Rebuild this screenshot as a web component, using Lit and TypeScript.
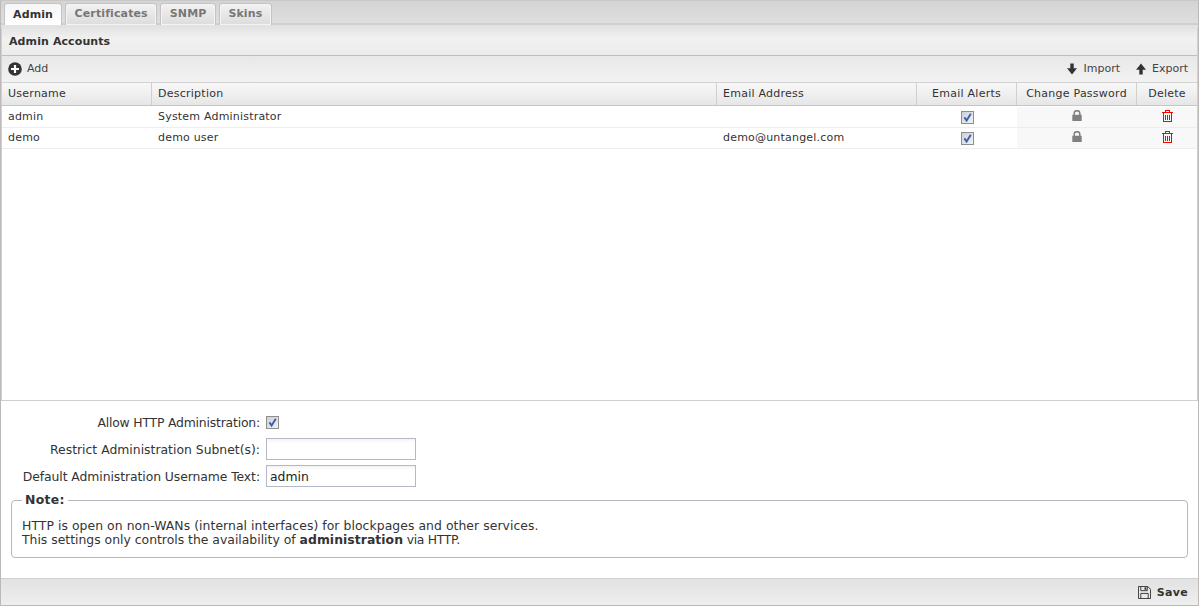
import { LitElement, html, css } from "lit";
import { customElement } from "lit/decorators.js";

const tick = html`<svg viewBox="0 0 13 13" width="13" height="13"><path d="M3.4 6.4 5.6 9.6 9.8 2.8" fill="none" stroke="#3f5fa8" stroke-width="1.9"/></svg>`;
const lock = html`<svg class="ic" viewBox="0 0 10 11" width="10" height="11"><path d="M0.3 4.8h9.4v5.6a.6.6 0 0 1-.6.6H.9a.6.6 0 0 1-.6-.6z" fill="#808080"/><path d="M2.2 5.2V3.2a2.8 2.5 0 0 1 5.6 0v2" fill="none" stroke="#808080" stroke-width="1.5"/></svg>`;
const trash = html`<svg class="ic" viewBox="0 0 11 12" width="11" height="12" shape-rendering="crispEdges"><g fill="none" stroke="#f00" stroke-width="1"><path d="M0 2.5h11M3.5 2.5V.5h4v2M1.5 2.5v9h8v-9M3.5 4.5v5M5.5 4.5v5M7.5 4.5v5"/></g></svg>`;

@customElement("app-root")
export class AppRoot extends LitElement {
  static styles = css`
    :host { display: block; width: 1199px; height: 606px; font-family: "DejaVu Sans", sans-serif; font-size: 11px; color: #333; overflow: hidden; }
    * { box-sizing: border-box; }
    .app { height: 606px; display: flex; flex-direction: column; border: 1px solid #bfb8b8; border-top-color: #c8c8c8; background: #fff; }
    .tabs { height: 24px; flex: none; display: flex; gap: 3px; padding: 2px 0 0 3px; background: linear-gradient(#d4d4d4, #dedede); border-bottom: 2px solid #d0d0d0; }
    .tab { height: 22px; padding: 0 8.5px 2px; border: 1px solid #c4c4c4; border-bottom: none; border-radius: 3px 3px 0 0; display: flex; align-items: center; font-weight: bold; color: #777; background: linear-gradient(#f2f2f2, #dcdcdc); box-shadow: inset 0 0 0 1px #f4f4f4; letter-spacing: .12px; }
    .tab.on { color: #333; background: linear-gradient(#f6f6f6, #fff); height: 23px; padding: 0 8px 2px 8px; box-shadow: none; }
    .strip { height: 3px; flex: none; background: #e2e2e2; }
    .body { flex: 1; display: flex; flex-direction: column; min-height: 0; }
    .panel { height: 373px; flex: none; display: flex; flex-direction: column; border-left: 1px solid #d0d0d0; border-right: 1px solid #d0d0d0; border-bottom: 1px solid #d0d0d0; }
    .phead { height: 28px; flex: none; display: flex; align-items: center; padding-left: 7px; font-weight: bold; background: linear-gradient(#e4e4e4, #f1f1f1 40%, #ececec); border-bottom: 1px solid #c4bcbc; letter-spacing: .1px; }
    .tbar { height: 27px; flex: none; display: flex; align-items: center; padding: 0 9px 1px 6px; background: linear-gradient(#e8e8e8, #f2f2f2); border-bottom: 1px solid #d2d2d2; color: #444; }
    .tbtn { display: flex; align-items: center; gap: 5px; }
    .tbtn + .tbtn { margin-left: 15px; }
    .sp { flex: 1; }
    .row { display: grid; grid-template-columns: 150px 565px 200px 100px 120px 60px; }
    .hrow { height: 23px; background: linear-gradient(#f8f8f8, #e6e6e6); border-bottom: 1px solid #c6c6c6; }
    .hrow > div { display: flex; align-items: center; padding: 0 0 1px 6px; border-right: 1px solid #d0d0d0; letter-spacing: .25px; }
    .hrow > .c { justify-content: center; padding: 0 0 1px; }
    .hrow > div:last-child { border-right: none; }
    .rows { padding-top: 1px; }
    .drow { height: 21px; border-bottom: 1px solid #ededed; }
    .drow > div { display: flex; align-items: center; padding-left: 6px; letter-spacing: .2px; padding-bottom: 2px; }
    .drow > .c { justify-content: center; padding: 0; }
    .drow > .act { background: #f8f8f8; align-items: flex-start; padding-top: 3px; }
    .ic { display: block; }
    .cb { display: inline-block; width: 13px; height: 13px; border: 1px solid #8e8e8e; background: linear-gradient(135deg, #ccd0dc, #f2f2f2); position: relative; margin-top: 1px; }
    .cb svg { position: absolute; left: -1px; top: -1px; }
    .form { flex: 1; padding: 10px 10px 0; font-size: 12.4px; }
    .frow { display: flex; align-items: center; height: 22px; margin-bottom: 5px; }
    .lab { width: 249px; text-align: right; color: #333; margin-right: 6px; white-space: nowrap; }
    .l1 { letter-spacing: -.19px; }
    .l3 { letter-spacing: -.08px; }
    .inp { width: 150px; height: 22px; border: 1px solid #b5b8c8; padding: 1px 3px 0; display: flex; align-items: center; background: linear-gradient(#f3f3f3, #fff 4px); color: #222; }
    .cb.f { margin-top: 0; }
    fieldset { margin: 6px 0 0; padding: 12px 10px 0; height: 65px; border: 1px solid #b9b5c0; border-radius: 4px; line-height: 14px; min-width: 0; }
    legend { font-weight: bold; padding: 0 3px; font-size: 12.4px; letter-spacing: .3px; color: #333; line-height: 14px; }
    fieldset b { letter-spacing: .05px; }
    .n1 { letter-spacing: .06px; }
    .n2 { letter-spacing: -.3px; }
    .foot { height: 27px; flex: none; display: flex; align-items: center; justify-content: flex-end; padding-right: 10px; gap: 6px; font-weight: bold; background: linear-gradient(#e2e2e2, #efefef); border-top: 1px solid #cfcfcf; letter-spacing: .3px; }
  `;

  render() {
    const rows = [
      ["admin", "System Administrator", ""],
      ["demo", "demo user", "demo@untangel.com"],
    ];
    return html`<div class="app">
      <div class="tabs">
        <div class="tab on">Admin</div><div class="tab">Certificates</div><div class="tab">SNMP</div><div class="tab">Skins</div>
      </div>
      <div class="strip"></div>
      <div class="body">
        <div class="panel">
          <div class="phead">Admin Accounts</div>
          <div class="tbar">
            <div class="tbtn"><svg viewBox="0 0 14 14" width="14" height="14"><circle cx="7" cy="7" r="6.8" fill="#333"/><path d="M7 3v8M3 7h8" stroke="#fff" stroke-width="2.2"/></svg>Add</div>
            <div class="sp"></div>
            <div class="tbtn"><svg viewBox="0 0 12 12" width="12" height="12"><path d="M4.3 .5h3.4v4.7H11L6 11.5 1 5.2h3.3z" fill="#333"/></svg>Import</div>
            <div class="tbtn"><svg viewBox="0 0 12 12" width="12" height="12"><path d="M4.3 11.5h3.4V6.8H11L6 .5 1 6.8h3.3z" fill="#333"/></svg>Export</div>
          </div>
          <div class="row hrow"><div>Username</div><div>Description</div><div>Email Address</div><div class="c">Email Alerts</div><div class="c">Change Password</div><div class="c">Delete</div></div>
          <div class="rows">${rows.map((r) => html`<div class="row drow"><div>${r[0]}</div><div>${r[1]}</div><div>${r[2]}</div><div class="c"><span class="cb">${tick}</span></div><div class="c act">${lock}</div><div class="c act">${trash}</div></div>`)}</div>
        </div>
        <div class="form">
          <div class="frow"><div class="lab l1">Allow HTTP Administration:</div><span class="cb f">${tick}</span></div>
          <div class="frow"><div class="lab">Restrict Administration Subnet(s):</div><div class="inp"></div></div>
          <div class="frow"><div class="lab l3">Default Administration Username Text:</div><div class="inp">admin</div></div>
          <fieldset><legend>Note:</legend><span class="n1">HTTP is open on non-WANs (internal interfaces) for blockpages and other services.</span><br>This settings only controls the availability of <b>administration</b><span class="n2"> via HTTP.</span></fieldset>
        </div>
      </div>
      <div class="foot"><svg viewBox="0 0 14 14" width="13" height="13"><path d="M.5.5h10l3 3v10H.5zM3 .5v4.5h7V.5M3 13.5V8h8v5.5" fill="none" stroke="#333" stroke-width="1"/><path d="M7 1.5h2v2.5H7z" fill="#333"/></svg>Save</div>
    </div>`;
  }
}
